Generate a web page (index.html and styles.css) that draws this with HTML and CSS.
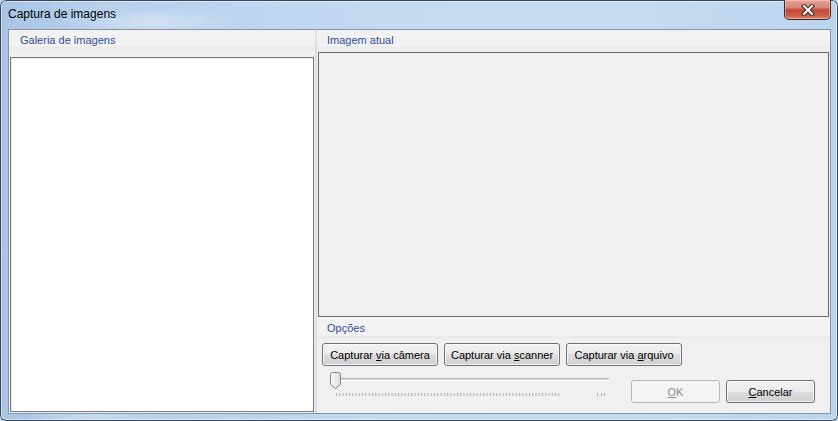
FILE: index.html
```html
<!DOCTYPE html>
<html lang="pt">
<head>
    <meta charset="UTF-8">
    <title>Captura de imagens</title>
    <link rel="stylesheet" href="styles.css">
</head>
<body>
    <div class="window">
        <!-- Title bar -->
        <div class="titlebar">
            <span class="title">Captura de imagens</span>
            <div class="close-btn">
                <svg width="14" height="12" viewBox="0 0 14 12">
                    <path d="M3 2 L11 10 M11 2 L3 10" stroke="#3c2323" stroke-width="4.2" stroke-linecap="square"/>
                    <path d="M3 2 L11 10 M11 2 L3 10" stroke="#ffffff" stroke-width="2.2" stroke-linecap="square"/>
                </svg>
            </div>
        </div>

        <!-- Client area -->
        <div class="client">
            <div class="gallery">
                <div class="section-header gallery-header">Galeria de imagens</div>
                <div class="listbox"></div>
            </div>

            <div class="splitter"></div>

            <div class="current">
                <div class="section-header current-header">Imagem atual</div>
                <div class="picture"></div>

                <div class="section-header options-header">Opções</div>
                <div class="capture-buttons">
                    <button class="btn capture">Capturar <u>v</u>ia câmera</button>
                    <button class="btn capture">Capturar via <u>s</u>canner</button>
                    <button class="btn capture">Capturar via <u>a</u>rquivo</button>
                </div>

                <div class="bottom-row">
                    <svg class="trackbar" width="280" height="26" viewBox="0 0 280 26">
                        <defs>
                            <pattern id="ticks" x="6" y="0" width="3.27" height="26" patternUnits="userSpaceOnUse">
                                <rect x="0" y="21" width="1" height="3" fill="#a9a9a9"/>
                            </pattern>
                            <linearGradient id="thumbFill" x1="0" y1="0" x2="1" y2="0">
                                <stop offset="0" stop-color="#fbfbfb"/>
                                <stop offset="1" stop-color="#dcdcdc"/>
                            </linearGradient>
                        </defs>
                        <rect x="6" y="6" width="273" height="1" fill="#b4b4b4"/>
                        <rect x="6" y="7" width="273" height="1" fill="#d6d6d6"/>
                        <rect x="6" y="8" width="273" height="1" fill="#ffffff"/>
                        <rect x="6" y="0" width="225" height="26" fill="url(#ticks)"/>
                        <rect x="267" y="21" width="1" height="3" fill="#a9a9a9"/>
                        <rect x="271" y="21" width="1" height="3" fill="#a9a9a9"/>
                        <rect x="274" y="21" width="1" height="3" fill="#a9a9a9"/>
                        <path d="M0.5 2.5 Q0.5 0.5 2.5 0.5 H8.5 Q10.5 0.5 10.5 2.5 V12.5 L5.5 16.5 L0.5 12.5 Z" fill="url(#thumbFill)" stroke="#858585"/>
                    </svg>

                    <div class="dialog-buttons">
                        <button class="btn" disabled><u>O</u>K</button>
                        <button class="btn"><u>C</u>ancelar</button>
                    </div>
                </div>
            </div>
        </div>
    </div>
</body>
</html>
```

FILE: styles.css
```css
body {
    margin: 0;
    padding: 0;
    font-family: 'Liberation Sans', Arial, sans-serif;
    background-color: #bcd4ee;
    overflow: hidden;
}

/* Window frame */
.window {
    width: 838px;
    height: 421px;
    box-sizing: border-box;
    display: flex;
    flex-direction: column;
    border-radius: 6px;
    background:
        radial-gradient(ellipse 90px 14px at 150px 22px, rgba(255, 255, 255, 0.35), rgba(255, 255, 255, 0)),
        radial-gradient(ellipse 70px 10px at 90px 414px, rgba(255, 255, 255, 0.3), rgba(255, 255, 255, 0)),
        linear-gradient(to right, #a9c5e5 0%, #b7d0ec 12%, #c3daf1 45%, #c5dbf1 75%, #bcd5ee 100%);
    box-shadow: inset 0 0 0 1px #3d4854, inset 0 0 0 2px rgba(255, 255, 255, 0.45);
}

/* Title bar */
.titlebar {
    height: 29px;
    display: flex;
    justify-content: space-between;
    align-items: flex-start;
}

.titlebar .title {
    padding: 7px 0 0 8px;
    font-size: 12px;
    line-height: 15px;
    color: #000;
}

.close-btn {
    width: 47px;
    height: 20px;
    box-sizing: border-box;
    margin-right: 7px;
    border: 1px solid #4e2621;
    border-top: none;
    border-radius: 0 0 5px 5px;
    background: linear-gradient(to bottom, #e6a597 0%, #d98474 40%, #c14a37 52%, #c85a44 80%, #dc8a70 100%);
    box-shadow: inset 0 0 0 1px rgba(255, 220, 210, 0.45);
    display: flex;
    align-items: center;
    justify-content: center;
}

/* Client area */
.client {
    height: 385px;
    box-sizing: border-box;
    margin: 0 7px 0 8px;
    border: 1px solid #8894a2;
    background-color: #f0f0f0;
    display: flex;
}

.section-header {
    box-sizing: border-box;
    font-size: 11px;
    line-height: 15px;
    color: #2c4d9e;
    background: linear-gradient(to bottom, #f2f2f2 0, #f2f2f2 16px, #e9e9e9 18px, #ececec 19px, #f0f0f0 21px);
}

/* Gallery */
.gallery {
    width: 306px;
    display: flex;
    flex-direction: column;
}

.gallery-header {
    height: 27px;
    padding: 3px 0 0 11px;
}

.listbox {
    flex: 1;
    margin: 0 1px 1px 1px;
    background: #fff;
    border: 1px solid #7b7b7b;
    box-shadow: inset 1px 1px 0 #e8e8e8;
}

.splitter {
    width: 2px;
    background-color: #d8e1ea;
}

/* Current image */
.current {
    width: 513px;
    display: flex;
    flex-direction: column;
}

.current-header {
    height: 22px;
    padding: 3px 0 0 10px;
}

.picture {
    height: 265px;
    box-sizing: border-box;
    margin: 0 1px;
    border: 1px solid #6a6a6a;
    background-color: #f0f0f0;
}

.options-header {
    height: 26px;
    padding: 4px 0 0 10px;
    background: linear-gradient(to bottom, #f2f2f2 0, #f2f2f2 18px, #e9e9e9 20px, #ececec 21px, #f0f0f0 23px);
}

.capture-buttons {
    display: flex;
    gap: 6px;
    padding-left: 5px;
}

/* Buttons */
.btn {
    height: 23px;
    padding: 0;
    box-sizing: border-box;
    font-family: 'Liberation Sans', Arial, sans-serif;
    font-size: 11px;
    color: #000;
    border: 1px solid #707070;
    border-radius: 3px;
    background: linear-gradient(to bottom, #f2f2f2 0%, #ebebeb 50%, #dddddd 50%, #cfcfcf 100%);
    box-shadow: inset 0 0 0 1px rgba(255, 255, 255, 0.75);
}

.btn:disabled {
    color: #8d8d8d;
    border-color: #b4b8bb;
    background: #f4f4f4;
    box-shadow: none;
}

.btn.capture {
    width: 116px;
}

.bottom-row {
    display: flex;
    align-items: flex-start;
}

.trackbar {
    display: block;
    margin: 6px 0 0 13px;
}

.dialog-buttons {
    display: flex;
    gap: 6px;
    margin: 14px 15px 0 auto;
}

.dialog-buttons .btn {
    width: 89px;
}
```
